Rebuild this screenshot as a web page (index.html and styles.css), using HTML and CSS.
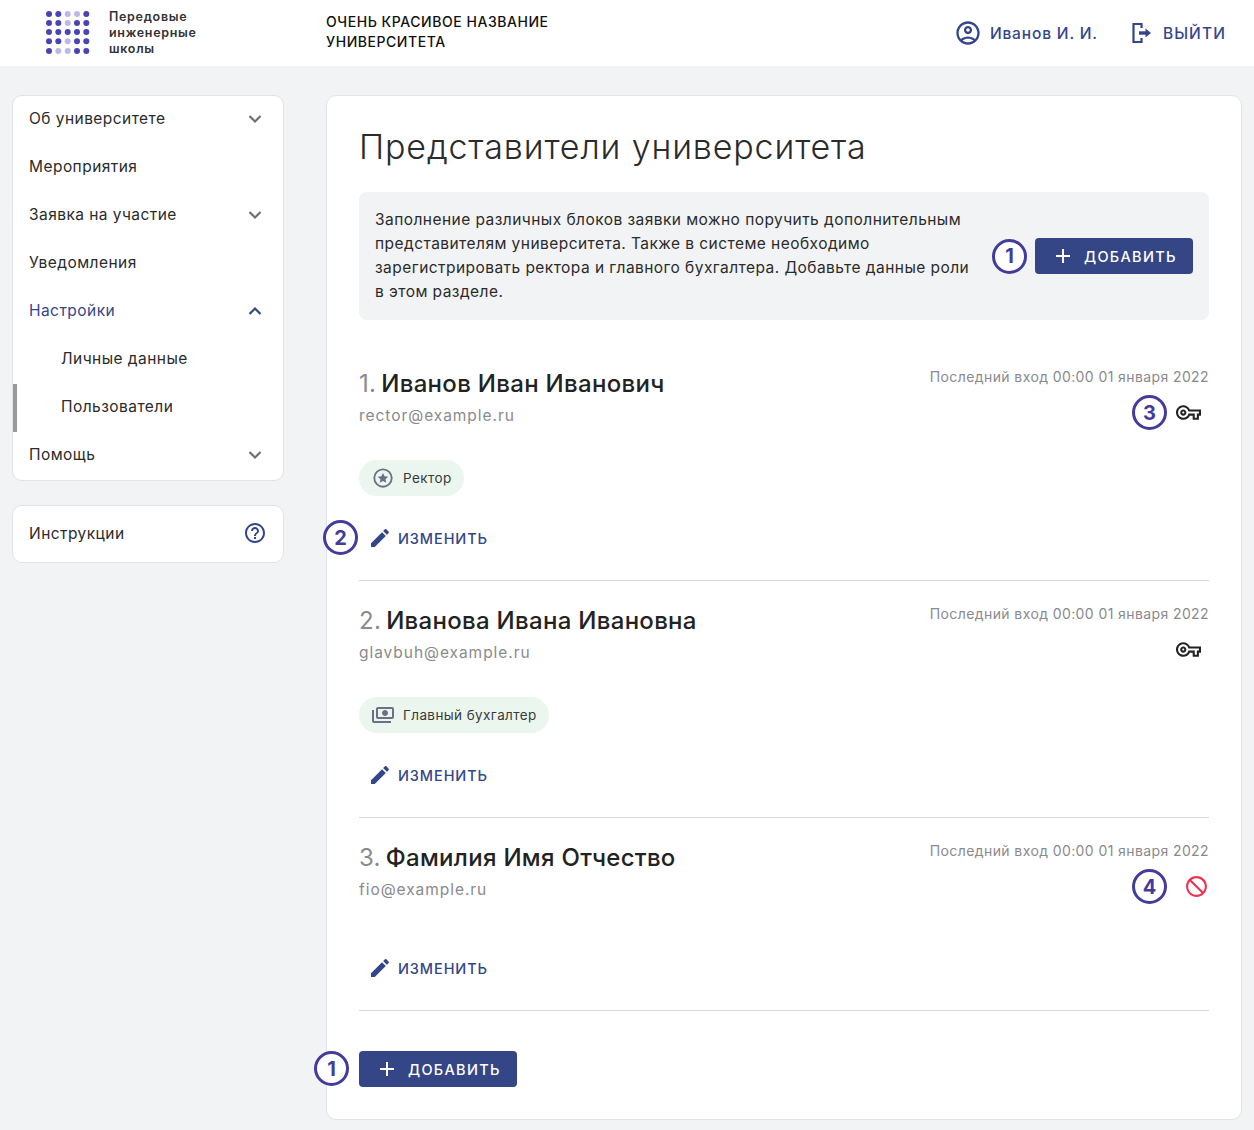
FILE: index.html
```html
<!DOCTYPE html>
<html lang="ru">
<head>
  <meta charset="UTF-8" />
  <meta name="viewport" content="width=device-width, initial-scale=1.0"/>
  <title>Представители университета</title>
  <link rel="stylesheet" href="styles.css">
</head>
<body>
  <svg class="sprite" width="0" height="0">
    <symbol id="i-edit" viewBox="0 0 24 24"><path d="M3 17.25V21h3.75L17.81 9.94l-3.75-3.75L3 17.25zM20.71 7.04c.39-.39.39-1.02 0-1.41l-2.34-2.34c-.39-.39-1.02-.39-1.41 0l-1.83 1.83 3.75 3.75 1.83-1.83z"/></symbol>
    <symbol id="i-key" viewBox="0 0 24 24"><path d="M22 19h-6v-4h-2.68c-1.14 2.42-3.6 4-6.32 4-3.86 0-7-3.14-7-7s3.14-7 7-7c2.72 0 5.17 1.58 6.32 4H24v6h-2v4zm-4-2h2v-4h2v-2H11.94l-.23-.67C11.01 8.34 9.11 7 7 7c-2.76 0-5 2.24-5 5s2.24 5 5 5c2.11 0 4.01-1.34 4.71-3.33l.23-.67H18v4zM7 15c-1.65 0-3-1.35-3-3s1.35-3 3-3 3 1.35 3 3-1.35 3-3 3zm0-4c-.55 0-1 .45-1 1s.45 1 1 1 1-.45 1-1-.45-1-1-1z"/></symbol>
    <symbol id="i-plus" viewBox="0 0 24 24"><path d="M19 13h-6v6h-2v-6H5v-2h6V5h2v6h6v2z"/></symbol>
    <symbol id="i-down" viewBox="0 0 24 24"><path d="M6.500 9l5.500 5.500L17.500 9" fill="none" stroke="currentColor" stroke-width="2.200"/></symbol>
    <symbol id="i-up" viewBox="0 0 24 24"><path d="M6.500 15L12 9.500l5.500 5.500" fill="none" stroke="currentColor" stroke-width="2.200"/></symbol>
  </svg>

  <header class="topbar">
    <div class="logo">
      <svg class="logo-dots" width="46" height="46" viewBox="0 0 46 46">
        <g fill="#4a43b5">
          <circle cx="4" cy="4" r="3"/><circle cx="13.300" cy="4" r="3"/><circle cx="41.300" cy="4" r="3"/>
          <circle cx="4" cy="13" r="3"/><circle cx="13.300" cy="13" r="3"/><circle cx="32" cy="13" r="3"/><circle cx="41.300" cy="13" r="3"/>
          <circle cx="4" cy="22" r="3"/><circle cx="13.300" cy="22" r="3"/><circle cx="22.700" cy="22" r="3"/><circle cx="32" cy="22" r="3"/><circle cx="41.300" cy="22" r="3"/>
          <circle cx="4" cy="31.300" r="3"/><circle cx="13.300" cy="31.300" r="3"/><circle cx="32" cy="31.300" r="3"/><circle cx="41.300" cy="31.300" r="3"/>
          <circle cx="4" cy="41" r="3"/><circle cx="32" cy="41" r="3"/><circle cx="41.300" cy="41" r="3"/>
        </g>
        <g fill="#bdb9e6">
          <circle cx="22.700" cy="4" r="3"/><circle cx="32" cy="4" r="3"/>
          <circle cx="22.700" cy="13" r="3"/>
          <circle cx="22.700" cy="31.300" r="3"/>
          <circle cx="13.300" cy="41" r="3"/><circle cx="22.700" cy="41" r="3"/>
        </g>
      </svg>
      <div class="logo-text">Передовые<br>инженерные<br>школы</div>
    </div>
    <div class="uni-name">ОЧЕНЬ КРАСИВОЕ НАЗВАНИЕ<br>УНИВЕРСИТЕТА</div>
    <div class="top-actions">
      <a class="top-link" href="#">
        <svg width="28" height="28" viewBox="0 0 24 24" fill="currentColor"><path d="M12 2C6.480 2 2 6.480 2 12s4.480 10 10 10 10-4.480 10-10S17.520 2 12 2zM7.350 18.500C8.660 17.560 10.260 17 12 17s3.340.56 4.650 1.500C15.340 19.440 13.740 20 12 20s-3.340-.56-4.650-1.500zm10.790-1.380C16.450 15.800 14.320 15 12 15s-4.450.8-6.140 2.120C4.700 15.730 4 13.950 4 12c0-4.420 3.580-8 8-8s8 3.580 8 8c0 1.950-.7 3.730-1.860 5.120zM12 6c-1.930 0-3.500 1.570-3.500 3.500S10.070 13 12 13s3.500-1.570 3.500-3.500S13.930 6 12 6zm0 5c-.83 0-1.500-.67-1.500-1.500S11.170 8 12 8s1.500.67 1.500 1.500S12.830 11 12 11z"/></svg>
        Иванов И. И.
      </a>
      <a class="top-link exit" href="#">
        <svg width="22" height="22" viewBox="0 0 22 22" fill="none" stroke="currentColor"><path d="M10.500 6V2H2.500v18h8v-4" stroke-width="2.200"/><path d="M8 11h7" stroke-width="3.400"/><path d="M14.500 6.500L20 11l-5.500 4.500z" fill="currentColor" stroke="none"/></svg>
        ВЫЙТИ
      </a>
    </div>
  </header>

  <div class="page">
    <aside class="sidebar">
      <nav class="card menu">
        <a class="menu-item" href="#">Об университете <svg class="chev"><use href="#i-down"/></svg></a>
        <a class="menu-item" href="#">Мероприятия</a>
        <a class="menu-item" href="#">Заявка на участие <svg class="chev"><use href="#i-down"/></svg></a>
        <a class="menu-item" href="#">Уведомления</a>
        <a class="menu-item open" href="#">Настройки <svg class="chev"><use href="#i-up"/></svg></a>
        <a class="menu-item sub" href="#">Личные данные</a>
        <a class="menu-item sub current" href="#">Пользователи</a>
        <a class="menu-item" href="#">Помощь <svg class="chev"><use href="#i-down"/></svg></a>
      </nav>
      <div class="card help">
        <a class="menu-item" href="#">Инструкции
          <svg class="help-icon" width="24" height="24" viewBox="0 0 24 24" fill="currentColor"><path d="M11 18h2v-2h-2v2zm1-16C6.480 2 2 6.480 2 12s4.480 10 10 10 10-4.480 10-10S17.520 2 12 2zm0 18c-4.410 0-8-3.590-8-8s3.590-8 8-8 8 3.590 8 8-3.590 8-8 8zm0-14c-2.210 0-4 1.790-4 4h2c0-1.100.9-2 2-2s2 .9 2 2c0 2-3 1.750-3 5h2c0-2.250 3-2.500 3-5 0-2.210-1.790-4-4-4z"/></svg>
        </a>
      </div>
    </aside>

    <main class="card content">
      <h1>Представители университета</h1>

      <div class="info">
        <p>Заполнение различных блоков заявки можно поручить дополнительным представителям университета. Также в системе необходимо зарегистрировать ректора и главного бухгалтера. Добавьте данные роли в этом разделе.</p>
        <span class="note">1</span>
        <button class="btn"><svg width="24" height="24"><use href="#i-plus"/></svg>ДОБАВИТЬ</button>
      </div>

      <section class="person first">
        <div class="person-head">
          <div>
            <h2><span class="num">1.</span>Иванов Иван Иванович</h2>
            <div class="email">rector@example.ru</div>
          </div>
          <div class="status">
            <div class="last-login">Последний вход 00:00 01 января 2022</div>
            <div class="status-icons">
              <span class="note">3</span>
              <svg class="key" width="25" height="25"><use href="#i-key"/></svg>
            </div>
          </div>
        </div>
        <div class="roles">
          <span class="chip">
            <svg width="22" height="22" viewBox="0 0 24 24" fill="none"><circle cx="12" cy="12" r="9.500" stroke="#6b7085" stroke-width="2"/><path d="M12 6.500l1.700 3.700 4 .4-3 2.700.9 4-3.600-2.100-3.600 2.100.9-4-3-2.700 4-.4z" fill="#6b7085"/></svg>
            Ректор
          </span>
        </div>
        <div class="edit-row">
          <span class="note note-left">2</span>
          <a class="edit" href="#"><svg width="24" height="24"><use href="#i-edit"/></svg>ИЗМЕНИТЬ</a>
        </div>
      </section>

      <section class="person">
        <div class="person-head">
          <div>
            <h2><span class="num">2.</span>Иванова Ивана Ивановна</h2>
            <div class="email">glavbuh@example.ru</div>
          </div>
          <div class="status">
            <div class="last-login">Последний вход 00:00 01 января 2022</div>
            <div class="status-icons">
              <svg class="key" width="25" height="25"><use href="#i-key"/></svg>
            </div>
          </div>
        </div>
        <div class="roles">
          <span class="chip">
            <svg width="22" height="24" viewBox="1 0 22 24" fill="#6b7085"><g transform="matrix(-1 0 0 1 24 0)"><path d="M19 14V6c0-1.100-.9-2-2-2H3c-1.100 0-2 .9-2 2v8c0 1.100.9 2 2 2h14c1.100 0 2-.9 2-2zm-2 0H3V6h14v8zm-7-7c-1.660 0-3 1.340-3 3s1.340 3 3 3 3-1.340 3-3-1.340-3-3-3zm13 0v11c0 1.100-.9 2-2 2H4v-2h17V7h2z"/></g></svg>
            Главный бухгалтер
          </span>
        </div>
        <div class="edit-row">
          <a class="edit" href="#"><svg width="24" height="24"><use href="#i-edit"/></svg>ИЗМЕНИТЬ</a>
        </div>
      </section>

      <section class="person">
        <div class="person-head">
          <div>
            <h2><span class="num">3.</span>Фамилия Имя Отчество</h2>
            <div class="email">fio@example.ru</div>
          </div>
          <div class="status">
            <div class="last-login">Последний вход 00:00 01 января 2022</div>
            <div class="status-icons">
              <span class="note">4</span>
              <svg class="blocked" width="25" height="25" viewBox="0 0 24 24" fill="#f0304f"><g transform="matrix(-1 0 0 1 24 0)"><path d="M12 2C6.480 2 2 6.480 2 12s4.480 10 10 10 10-4.480 10-10S17.520 2 12 2zM4 12c0-4.420 3.580-8 8-8 1.850 0 3.550.63 4.900 1.690L5.690 16.900C4.630 15.550 4 13.850 4 12zm8 8c-1.850 0-3.550-.63-4.900-1.690L18.310 7.100C19.370 8.450 20 10.150 20 12c0 4.420-3.580 8-8 8z"/></g></svg>
            </div>
          </div>
        </div>
        <div class="edit-row no-roles">
          <a class="edit" href="#"><svg width="24" height="24"><use href="#i-edit"/></svg>ИЗМЕНИТЬ</a>
        </div>
      </section>

      <div class="add-row">
        <span class="note note-left">1</span>
        <button class="btn"><svg width="24" height="24"><use href="#i-plus"/></svg>ДОБАВИТЬ</button>
      </div>
    </main>
  </div>
</body>
</html>
```

FILE: styles.css
```css
* {
  box-sizing: border-box;
}
body {
  font-family: Inter, "Noto Sans", sans-serif;
  margin: 0;
  background: #f2f3f5;
  color: #2b2b2b;
}
a {
  color: inherit;
  text-decoration: none;
}
.sprite {
  display: block;
  height: 0;
}

/* top bar */
.topbar {
  display: flex;
  align-items: center;
  height: 66px;
  background: #fff;
  padding: 0 28px 0 45px;
}
.logo {
  display: flex;
  align-items: center;
  width: 281px;
  gap: 18px;
}
.logo-text {
  font-size: 12.5px;
  line-height: 16px;
  font-weight: 600;
  letter-spacing: 0.7px;
  color: #333;
}
.uni-name {
  font-size: 14px;
  line-height: 20px;
  font-weight: 500;
  letter-spacing: 0.55px;
  color: #111;
  padding-bottom: 2px;
}
.top-actions {
  margin-left: auto;
  display: flex;
  align-items: center;
  gap: 33px;
}
.top-link {
  display: flex;
  align-items: center;
  gap: 8px;
  font-size: 15.500px;
  font-weight: 500;
  letter-spacing: 0.85px;
  color: #34468a;
}
.exit {
  gap: 10px;
  letter-spacing: 1.1px;
}

/* layout */
.page {
  display: flex;
  align-items: flex-start;
  gap: 42px;
  padding: 29px 12px 10px;
}
.card {
  background: #fff;
  border: 1px solid #e2e3e6;
  border-radius: 10px;
}

/* side menu */
.sidebar {
  width: 272px;
  flex-shrink: 0;
  display: flex;
  flex-direction: column;
  gap: 24px;
}
.menu-item {
  position: relative;
  display: flex;
  align-items: center;
  justify-content: space-between;
  height: 48px;
  padding: 0 16px 4px;
  font-size: 15.500px;
  letter-spacing: 0.45px;
  color: #2b2b2b;
}
.chev {
  width: 24px;
  height: 24px;
  margin-top: 2px;
  color: #6e6e72;
}
.open {
  color: #34468a;
}
.open .chev {
  color: #34468a;
}
.sub {
  padding-left: 48px;
}
.current::before {
  content: "";
  position: absolute;
  left: 0;
  top: 0;
  width: 4px;
  height: 48px;
  background: #999;
}
.help .menu-item {
  height: 56px;
  padding-bottom: 2px;
}
.help-icon {
  color: #34468a;
}

/* main card */
.content {
  width: 916px;
  padding: 31px 32px 32px;
}
h1 {
  margin: 0 0 25px;
  font-size: 34px;
  line-height: 40px;
  font-weight: 300;
  letter-spacing: 0.85px;
  color: #2b2b2b;
}
.info {
  display: flex;
  align-items: center;
  height: 128px;
  padding: 0 16px;
  background: #f2f3f5;
  border-radius: 8px;
}
.info p {
  width: 600px;
  margin: 0 17px 0 0;
  font-size: 15.500px;
  line-height: 24px;
  letter-spacing: 0.45px;
}
.note {
  flex-shrink: 0;
  display: flex;
  align-items: center;
  justify-content: center;
  width: 35px;
  height: 35px;
  border: 3px solid #443c9c;
  border-radius: 50%;
  background: #fff;
  font-size: 20px;
  font-weight: 700;
  color: #443c9c;
}
.info .note {
  margin-right: 8px;
}
.note-left {
  position: absolute;
  left: -36px;
  top: 0;
}
.btn {
  display: flex;
  align-items: center;
  gap: 9px;
  height: 36px;
  padding: 0 16px;
  border: none;
  border-radius: 4px;
  background: #344685;
  color: #fff;
  font-family: inherit;
  font-size: 14.500px;
  font-weight: 500;
  letter-spacing: 1.3px;
  white-space: nowrap;
  cursor: pointer;
}
.btn svg {
  fill: #fff;
}

/* people list */
.person {
  padding: 24px 0;
  border-bottom: 1px solid #d8d6e4;
}
.person.first {
  padding-top: 48px;
}
.person-head {
  display: flex;
  justify-content: space-between;
}
h2 {
  margin: 0 0 4px;
  font-size: 24px;
  line-height: 32px;
  font-weight: 500;
  letter-spacing: 0.3px;
  color: #222;
}
.num {
  margin-right: 5px;
  color: #8a8a8e;
  font-weight: 400;
}
.email {
  font-size: 15.500px;
  line-height: 24px;
  letter-spacing: 0.95px;
  color: #8a8a8e;
}
.status {
  text-align: right;
}
.last-login {
  font-size: 14px;
  line-height: 18px;
  letter-spacing: 0.4px;
  color: #8a8a8e;
}
.status-icons {
  display: flex;
  justify-content: flex-end;
  align-items: center;
  gap: 9px;
  height: 35px;
  margin-top: 9px;
}
.key {
  margin-right: 8px;
  fill: #222;
}
.blocked {
  margin-left: 8px;
}
.roles {
  display: flex;
  margin-top: 30px;
}
.chip {
  display: flex;
  align-items: center;
  gap: 9px;
  height: 36px;
  padding: 0 12px 0 13px;
  border-radius: 18px;
  background: #eaf6ee;
  font-size: 13.500px;
  letter-spacing: 0.4px;
  color: #3a3a3c;
}
.edit-row {
  position: relative;
  margin-top: 24px;
  height: 36px;
  display: flex;
  align-items: center;
}
.edit-row.no-roles {
  margin-top: 46px;
}
.edit {
  display: flex;
  align-items: center;
  gap: 6px;
  padding-left: 9px;
  font-size: 14.500px;
  font-weight: 500;
  letter-spacing: 0.9px;
  color: #34468a;
}
.edit svg {
  fill: #34468a;
}
.add-row {
  position: relative;
  margin-top: 40px;
  display: flex;
}
.add-row .note {
  left: -45px;
}
```
